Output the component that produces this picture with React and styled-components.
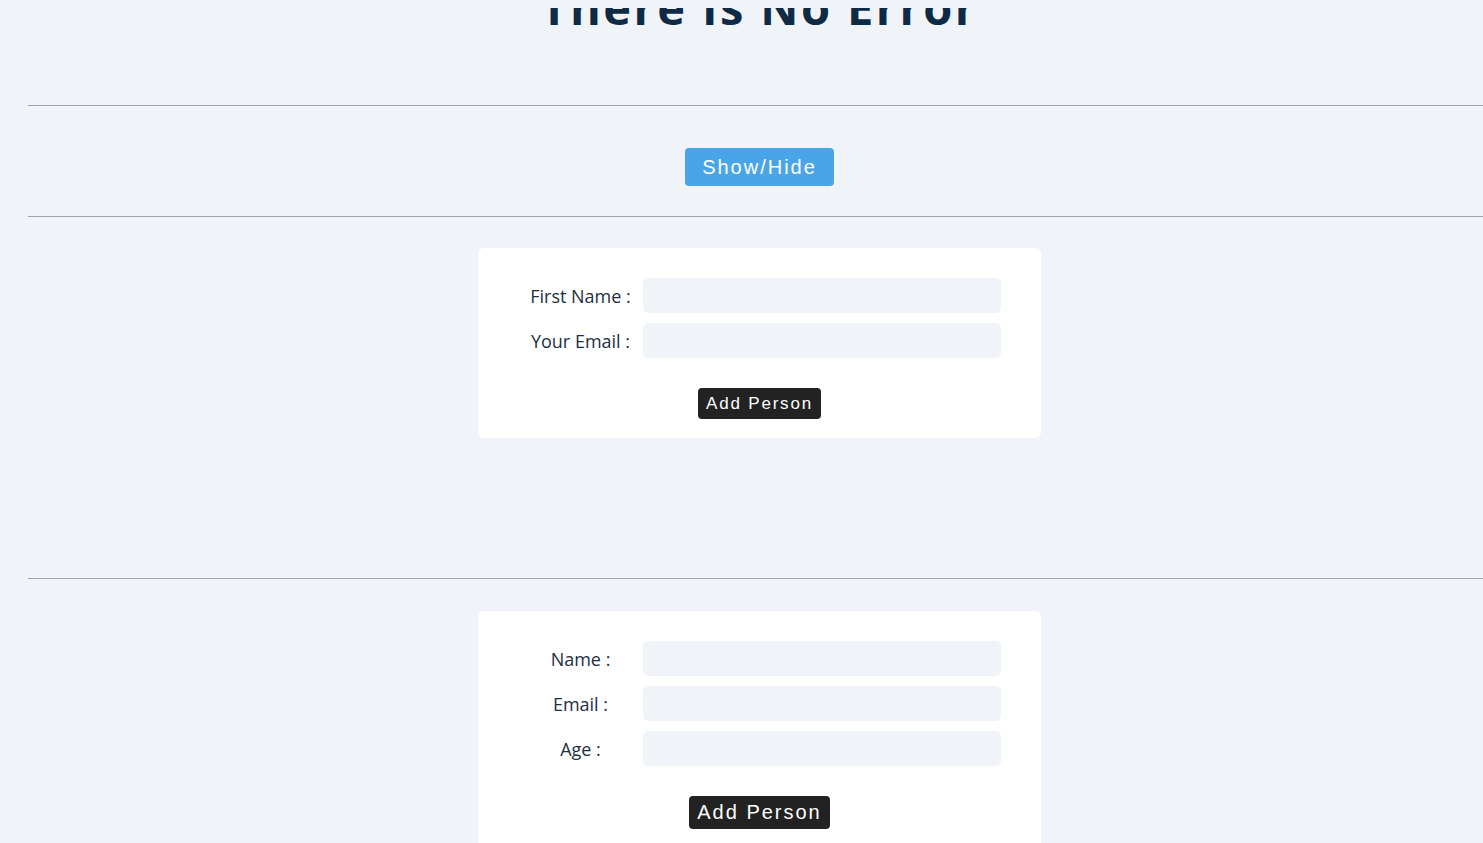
import React from 'react'
import styled, { createGlobalStyle } from 'styled-components'

const GlobalStyle = createGlobalStyle`
    html {
        overflow: hidden;
    }

    body {
        margin: 8px 0 8px 8px;
        background: #f0f4f8;
        font-family: "Open Sans", "Noto Sans", sans-serif;
        color: #1d2f42;
    }
`

const App = () => {
    return (
        <>
            <GlobalStyle />
            <Page>
                <Title>There Is No Error</Title>
                <Divider $gap={68} />
                <ToggleRow>
                    <ToggleButton>Show/Hide</ToggleButton>
                </ToggleRow>
                <Divider />
                <Card>
                    <FormGrid>
                        <Label>First Name :</Label>
                        <Input type="text" />
                        <Label>Your Email :</Label>
                        <Input type="email" />
                    </FormGrid>
                    <Actions>
                        <SubmitButton>Add Person</SubmitButton>
                    </Actions>
                </Card>
                <Divider $gap={140} />
                <Card $gap={32}>
                    <FormGrid>
                        <Label>Name :</Label>
                        <Input type="text" />
                        <Label>Email :</Label>
                        <Input type="email" />
                        <Label>Age :</Label>
                        <Input type="number" />
                    </FormGrid>
                    <Actions>
                        <SubmitButton $large>Add Person</SubmitButton>
                    </Actions>
                </Card>
            </Page>
        </>
    )
}

export default App

const Page = styled.main`
    width: 1503px;
    margin-top: -31px;
`

const Title = styled.h1`
    margin: 0;
    text-align: center;
    font-size: 47px;
    line-height: 60px;
    font-weight: 700;
    letter-spacing: 2.4px;
    color: #0f2a44;
`

const Divider = styled.hr`
    border: none;
    border-top: 1px solid #a3a3a3;
    margin: ${p => p.$gap || 0}px 0 0 20px;
`

const ToggleRow = styled.div`
    display: flex;
    justify-content: center;
    padding: 42px 0 30px;
`

const ToggleButton = styled.button`
    width: 149px;
    height: 38px;
    border: none;
    border-radius: 4px;
    background: #4aa5e8;
    color: #fff;
    font-family: "Liberation Sans", Arial, sans-serif;
    font-size: 20px;
    letter-spacing: 2px;
    cursor: pointer;
`

const Card = styled.section`
    width: 563px;
    box-sizing: border-box;
    margin: ${p => p.$gap || 31}px auto 0;
    padding: 30px 40px 19px;
    background: #fff;
    border-radius: 6px;
`

const FormGrid = styled.div`
    display: grid;
    grid-template-columns: 125px 358px;
    row-gap: 10px;
    align-items: center;
`

const Label = styled.label`
    text-align: center;
    font-size: 18px;
    color: #1d2f42;
`

const Input = styled.input`
    height: 35px;
    box-sizing: border-box;
    border: none;
    border-radius: 5px;
    background: #f0f4f8;
    outline: none;
`

const Actions = styled.div`
    display: flex;
    justify-content: center;
    margin-top: 30px;
`

const SubmitButton = styled.button`
    height: ${p => (p.$large ? '33px' : '31px')};
    padding: 0 8px;
    border: none;
    border-radius: 4px;
    background: #222;
    color: #fff;
    font-family: "Liberation Sans", Arial, sans-serif;
    font-size: ${p => (p.$large ? '20px' : '17px')};
    letter-spacing: ${p => (p.$large ? '2px' : '1.8px')};
    cursor: pointer;
`
